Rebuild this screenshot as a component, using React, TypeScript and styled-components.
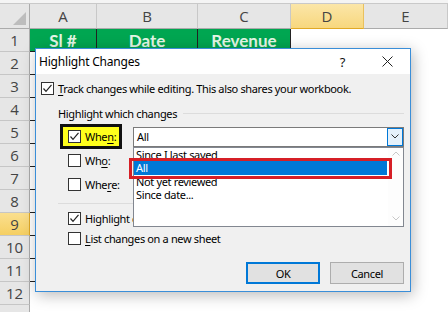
import React from "react";
import styled, { createGlobalStyle, css } from "styled-components";

const GlobalStyle = createGlobalStyle`
  html, body { margin: 0; padding: 0; background: #fff; }
  body { width: 448px; height: 312px; overflow: hidden; }
`;

const Sheet = styled.div`
  position: relative;
  width: 448px;
  height: 312px;
  overflow: hidden;
  background: #fff;
  font-family: "Open Sans", "Liberation Sans", sans-serif;
`;

const TopStrip = styled.div`
  height: 3px;
  background: #f4f4f4;
  border-bottom: 1px solid #c9c9c9;
`;

const Grid = styled.div`
  display: grid;
  grid-template-columns: 30px 67px 101px 93px 73px 84px;
  grid-template-rows: 25px repeat(13, 23px);
`;

const Corner = styled.div`
  position: relative;
  background: #e6e6e6;
  border-right: 1px solid #ababab;
  border-bottom: 1px solid #ababab;
  box-sizing: border-box;
  &::after {
    content: "";
    position: absolute;
    right: 3px;
    bottom: 3px;
    width: 0;
    height: 0;
    border-left: 13px solid transparent;
    border-bottom: 13px solid #bdbdbd;
  }
`;

const ColHead = styled.div<{ $sel?: boolean }>`
  box-sizing: border-box;
  display: flex;
  align-items: center;
  justify-content: center;
  font-size: 15px;
  color: #444;
  background: ${(p) => (p.$sel ? "linear-gradient(#fbe6a8, #f7d77e)" : "#e6e6e6")};
  border-right: 1px solid ${(p) => (p.$sel ? "#e9c15e" : "#c8c8c8")};
  border-bottom: 1px solid ${(p) => (p.$sel ? "#e1a925" : "#ababab")};
`;

const RowHead = styled.div<{ $sel?: boolean }>`
  box-sizing: border-box;
  display: flex;
  align-items: center;
  justify-content: center;
  font-size: 15px;
  color: #444;
  background: ${(p) => (p.$sel ? "linear-gradient(#fadf8f, #f5cf62)" : "#e6e6e6")};
  border-right: 1px solid ${(p) => (p.$sel ? "#e1a925" : "#ababab")};
  border-bottom: 1px solid #c6c6c6;
`;

const Cell = styled.div<{ $green?: boolean; $table?: boolean }>`
  box-sizing: border-box;
  display: flex;
  align-items: center;
  justify-content: center;
  ${(p) =>
    p.$table &&
    css`
      border-right: 1px solid #222;
      border-bottom: 1px solid #222;
    `}
  ${(p) =>
    p.$green &&
    css`
      background: #00a651;
      color: #e4f6e6;
      font-family: Lato, "Open Sans", sans-serif;
      font-weight: 700;
      font-size: 17px;
    `}
`;

/* ---------- Dialog ---------- */

const Dialog = styled.div`
  position: absolute;
  left: 35px;
  top: 48px;
  width: 376px;
  height: 244px;
  box-sizing: border-box;
  border: 1px solid #3a8ed8;
  background: #f0f0f0;
  box-shadow: 2px 3px 14px rgba(0, 0, 0, 0.28);
  display: flex;
  flex-direction: column;
  font-family: "Noto Sans", "Open Sans", sans-serif;
  font-size: 11px;
  letter-spacing: -0.35px;
  color: #000;
`;

const TitleBar = styled.div`
  height: 25px;
  flex: none;
  background: #fff;
  display: flex;
  align-items: center;
  padding-left: 3px;
`;

const Title = styled.span`
  font-size: 12px;
  letter-spacing: -0.2px;
  flex: 1;
`;

const TitleButton = styled.span`
  width: 45px;
  display: flex;
  justify-content: center;
  align-items: center;
  font-size: 13px;
  color: #111;
`;

const Body = styled.div`
  flex: 1;
  display: flex;
  flex-direction: column;
  padding: 8px 6px 0 5px;
`;

const CheckRow = styled.div<{ $indent?: number; $h?: number; $mt?: number }>`
  display: flex;
  align-items: center;
  gap: 4px;
  height: ${(p) => p.$h ?? 13}px;
  margin-left: ${(p) => p.$indent ?? 0}px;
  margin-top: ${(p) => p.$mt ?? 0}px;
  white-space: nowrap;
`;

const Box = styled.span`
  width: 13px;
  height: 13px;
  flex: none;
  box-sizing: border-box;
  border: 1px solid #333;
  background: #fff;
  display: flex;
  align-items: center;
  justify-content: center;
`;

const Key = styled.span`
  text-decoration: underline;
  text-underline-offset: 2px;
`;

const GroupHead = styled.div`
  display: flex;
  align-items: center;
  height: 14px;
  margin-top: 11px;
  margin-left: 17px;
  white-space: nowrap;
`;

const GroupLine = styled.span`
  flex: 1;
  height: 0;
  border-top: 1px solid #dcdcdc;
  margin-left: 6px;
`;

const Separator = styled.div`
  margin: 7px 0 0 17px;
  border-top: 1px solid #dcdcdc;
`;

const WhenRow = styled.div`
  display: flex;
  align-items: center;
  height: 25px;
  margin-top: 4px;
`;

const Marker = styled.div`
  margin-left: 19px;
  width: 62px;
  height: 25px;
  box-sizing: border-box;
  border: 3px solid #111;
  background: #ffff1c;
  display: flex;
  align-items: center;
  gap: 4px;
  padding-left: 5px;
`;

const Combo = styled.div`
  position: relative;
  margin-left: 11px;
  width: 271px;
  height: 20px;
  box-sizing: border-box;
  border: 1px solid #7a7a7a;
  background: #fff;
  display: flex;
  align-items: center;
  padding-left: 3px;
`;

const ComboText = styled.span`
  flex: 1;
`;

const DropButton = styled.span`
  width: 16px;
  height: 18px;
  box-sizing: border-box;
  background: #e5f1fb;
  border: 1px solid #0078d7;
  display: flex;
  align-items: center;
  justify-content: center;
`;

const List = styled.div`
  position: absolute;
  left: -1px;
  top: 19px;
  width: 271px;
  height: 80px;
  box-sizing: border-box;
  border: 1px solid #828790;
  background: #fff;
  display: flex;
  z-index: 2;
`;

const Items = styled.div`
  flex: 1;
  display: flex;
  flex-direction: column;
`;

const Item = styled.div<{ $active?: boolean }>`
  position: relative;
  height: 13.5px;
  line-height: 13.5px;
  padding-left: 2px;
  margin-right: 1px;
  white-space: nowrap;
  ${(p) =>
    p.$active &&
    css`
      background: #0078d7;
      color: #fff;
      z-index: 1;
      &::after {
        content: "";
        position: absolute;
        left: -5px;
        right: -5px;
        top: -3px;
        bottom: -4px;
        border: 3px solid #d61f26;
        box-sizing: border-box;
      }
    `}
`;

const ScrollBar = styled.div`
  width: 15px;
  flex: none;
  display: flex;
  flex-direction: column;
  justify-content: space-between;
  align-items: center;
  padding: 3px 0 5px;
  background: #fdfdfd;
`;

const OptionRow = styled.div<{ $h: number }>`
  display: flex;
  align-items: center;
  gap: 4px;
  height: ${(p) => p.$h}px;
  margin-left: 27px;
`;

const Buttons = styled.div`
  display: flex;
  justify-content: flex-end;
  gap: 10px;
  margin-top: 17px;
`;

const Button = styled.div<{ $default?: boolean }>`
  width: 74px;
  height: 22px;
  box-sizing: border-box;
  background: #e1e1e1;
  border: ${(p) => (p.$default ? "2px solid #0078d7" : "1px solid #adadad")};
  display: flex;
  align-items: center;
  justify-content: center;
`;

const Check = ({ on }: { on?: boolean }) => (
  <Box>
    {on && (
      <svg width="11" height="11" viewBox="0 0 11 11">
        <polyline points="1.5,5.5 4,8.3 9.5,1.8" fill="none" stroke="#222" strokeWidth="1.2" />
      </svg>
    )}
  </Box>
);

const Chevron = ({ color = "#333", up = false }: { color?: string; up?: boolean }) => (
  <svg width="8" height="5" viewBox="0 0 8 5">
    <polyline
      points={up ? "0.5,4.5 4,1 7.5,4.5" : "0.5,0.5 4,4 7.5,0.5"}
      fill="none"
      stroke={color}
      strokeWidth="1"
    />
  </svg>
);

const cols = ["A", "B", "C", "D", "E"];

export default function App() {
  const rows = Array.from({ length: 13 }, (_, i) => i + 1);
  return (
    <>
      <GlobalStyle />
      <Sheet>
        <TopStrip />
        <Grid>
          <Corner />
          {cols.map((c) => (
            <ColHead key={c} $sel={c === "D"}>
              {c}
            </ColHead>
          ))}
          {rows.map((r) => (
            <React.Fragment key={r}>
              <RowHead $sel={r === 9}>{r <= 12 ? r : ""}</RowHead>
              {r === 1 ? (
                <>
                  <Cell $green $table>Sl #</Cell>
                  <Cell $green $table>Date</Cell>
                  <Cell $green $table>Revenue</Cell>
                </>
              ) : (
                <>
                  <Cell $table={r <= 11} />
                  <Cell $table={r <= 11} />
                  <Cell $table={r <= 11} />
                </>
              )}
              <Cell />
              <Cell />
            </React.Fragment>
          ))}
        </Grid>

        <Dialog>
          <TitleBar>
            <Title>Highlight Changes</Title>
            <TitleButton>?</TitleButton>
            <TitleButton>
              <svg width="11" height="11" viewBox="0 0 11 11">
                <path d="M0.5 0.5 L10.5 10.5 M10.5 0.5 L0.5 10.5" stroke="#222" strokeWidth="1" />
              </svg>
            </TitleButton>
          </TitleBar>
          <Body>
            <CheckRow>
              <Check on />
              <span>
                <Key>T</Key>rack changes while editing. This also shares your workbook.
              </span>
            </CheckRow>
            <GroupHead>
              Highlight which changes
              <GroupLine />
            </GroupHead>
            <WhenRow>
              <Marker>
                <Check on />
                <span>
                  Whe<Key>n</Key>:
                </span>
              </Marker>
              <Combo>
                <ComboText>All</ComboText>
                <DropButton>
                  <Chevron />
                </DropButton>
                <List>
                  <Items>
                    <Item>Since I last saved</Item>
                    <Item $active>All</Item>
                    <Item>Not yet reviewed</Item>
                    <Item>Since date...</Item>
                  </Items>
                  <ScrollBar>
                    <Chevron color="#c8c8c8" up />
                    <Chevron color="#c8c8c8" />
                  </ScrollBar>
                </List>
              </Combo>
            </WhenRow>
            <OptionRow $h={23}>
              <Check />
              <span>
                Wh<Key>o</Key>:
              </span>
            </OptionRow>
            <OptionRow $h={24}>
              <Check />
              <span>
                Whe<Key>r</Key>e:
              </span>
            </OptionRow>
            <Separator />
            <CheckRow $indent={27} $h={14} $mt={7}>
              <Check on />
              <span>
                Highlight changes on <Key>s</Key>creen
              </span>
            </CheckRow>
            <CheckRow $indent={27} $h={14} $mt={6}>
              <Check />
              <span>
                <Key>L</Key>ist changes on a new sheet
              </span>
            </CheckRow>
            <Buttons>
              <Button $default>OK</Button>
              <Button>Cancel</Button>
            </Buttons>
          </Body>
        </Dialog>
      </Sheet>
    </>
  );
}
